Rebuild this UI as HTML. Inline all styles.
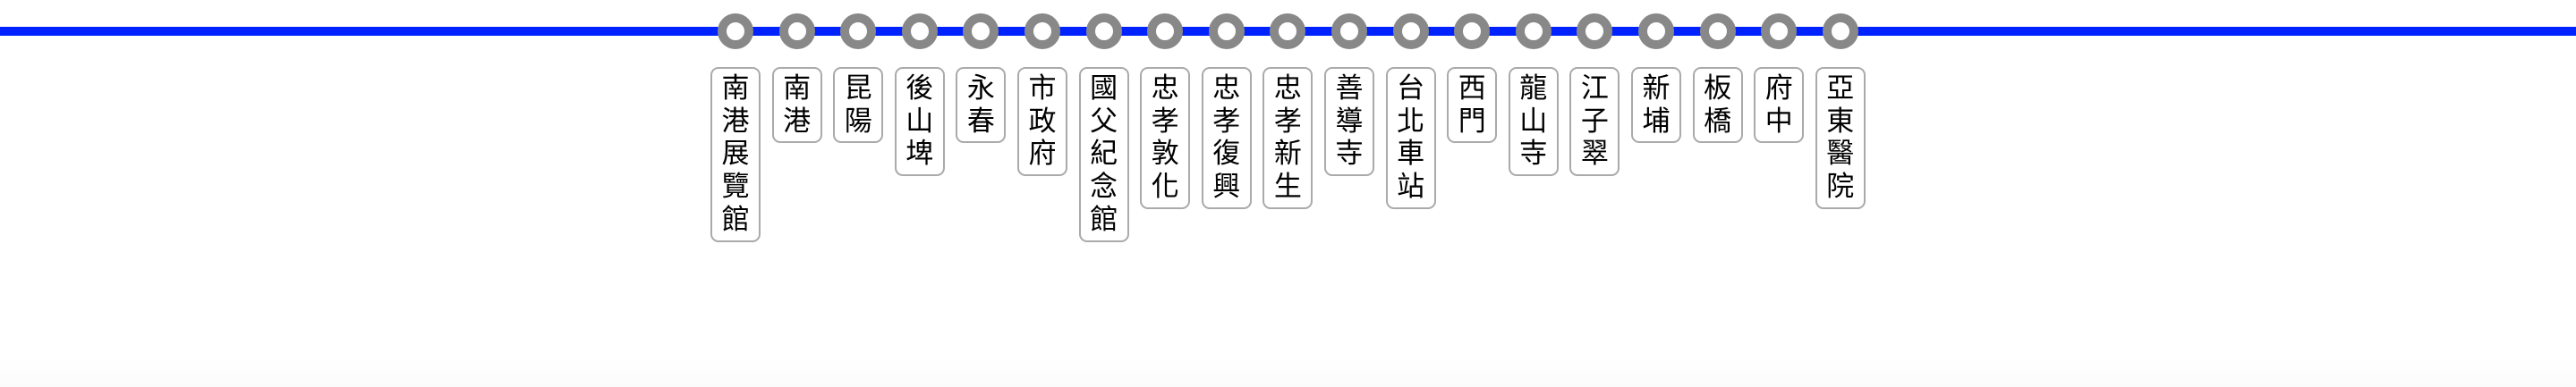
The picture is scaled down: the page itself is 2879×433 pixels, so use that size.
<!DOCTYPE html>
<html><head><meta charset="utf-8"><style>
html,body{margin:0;padding:0;background:#fff;}
body{width:2879px;height:433px;position:relative;overflow:hidden;}
.line{position:absolute;left:0;top:30px;width:2879px;height:10px;background:#0022ff;}
.st{position:absolute;top:15px;width:20px;height:20px;border:10px solid #888;border-radius:50%;background:#fff;box-sizing:content-box;}
.lb{position:absolute;top:75px;width:52px;border:2px solid #aaa;border-radius:9px;background:#fff;text-align:center;font-family:"Liberation Sans","Noto Sans CJK TC",sans-serif;font-size:31px;line-height:36.7px;padding:4px 0 4px;color:#000;}
.bot{position:absolute;left:0;top:400px;width:2879px;height:33px;background:linear-gradient(#fff,#fbfbfb);}
</style></head><body>
<div class="bot"></div>
<div class="line"></div>
<div id="c"></div>
<script>
var n=["南港展覽館","南港","昆陽","後山埤","永春","市政府","國父紀念館","忠孝敦化","忠孝復興","忠孝新生","善導寺","台北車站","西門","龍山寺","江子翠","新埔","板橋","府中","亞東醫院"];
var h="";
for(var i=0;i<n.length;i++){var cx=822+i*68.6;
h+='<div class="st" style="left:'+(cx-20)+'px"></div>';
h+='<div class="lb" style="left:'+(cx-28)+'px">'+n[i].split("").join("<br>")+'</div>';}
document.getElementById("c").innerHTML=h;
</script>
</body></html>
